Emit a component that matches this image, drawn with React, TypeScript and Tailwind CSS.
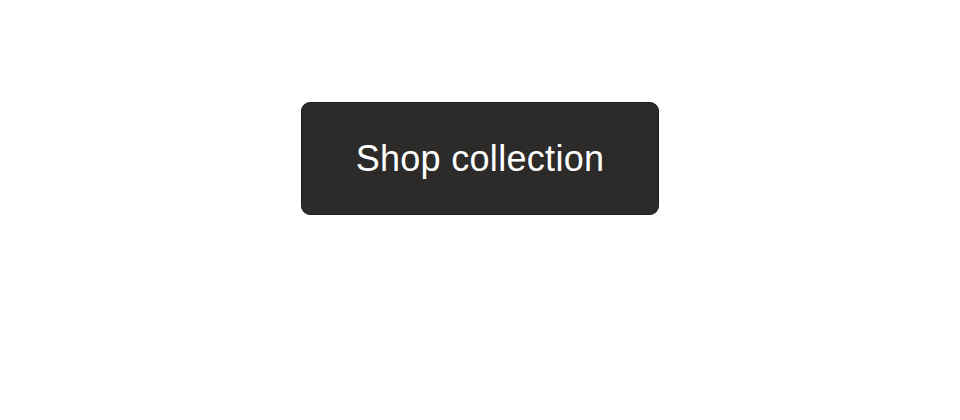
export default function App() {
  return (
    <div className="w-[960px] h-[420px] bg-white flex justify-center pt-[102px]">
      <button
        className="w-[358px] h-[113px] rounded-[9px] bg-[#2c2b2a] border border-[#1f1e1d] text-white text-[36px] flex items-center justify-center pb-[0px] tracking-[0.3px]"
        style={{ fontFamily: '"Liberation Sans", Arial, sans-serif' }}
      >
        Shop collection
      </button>
    </div>
  );
}
